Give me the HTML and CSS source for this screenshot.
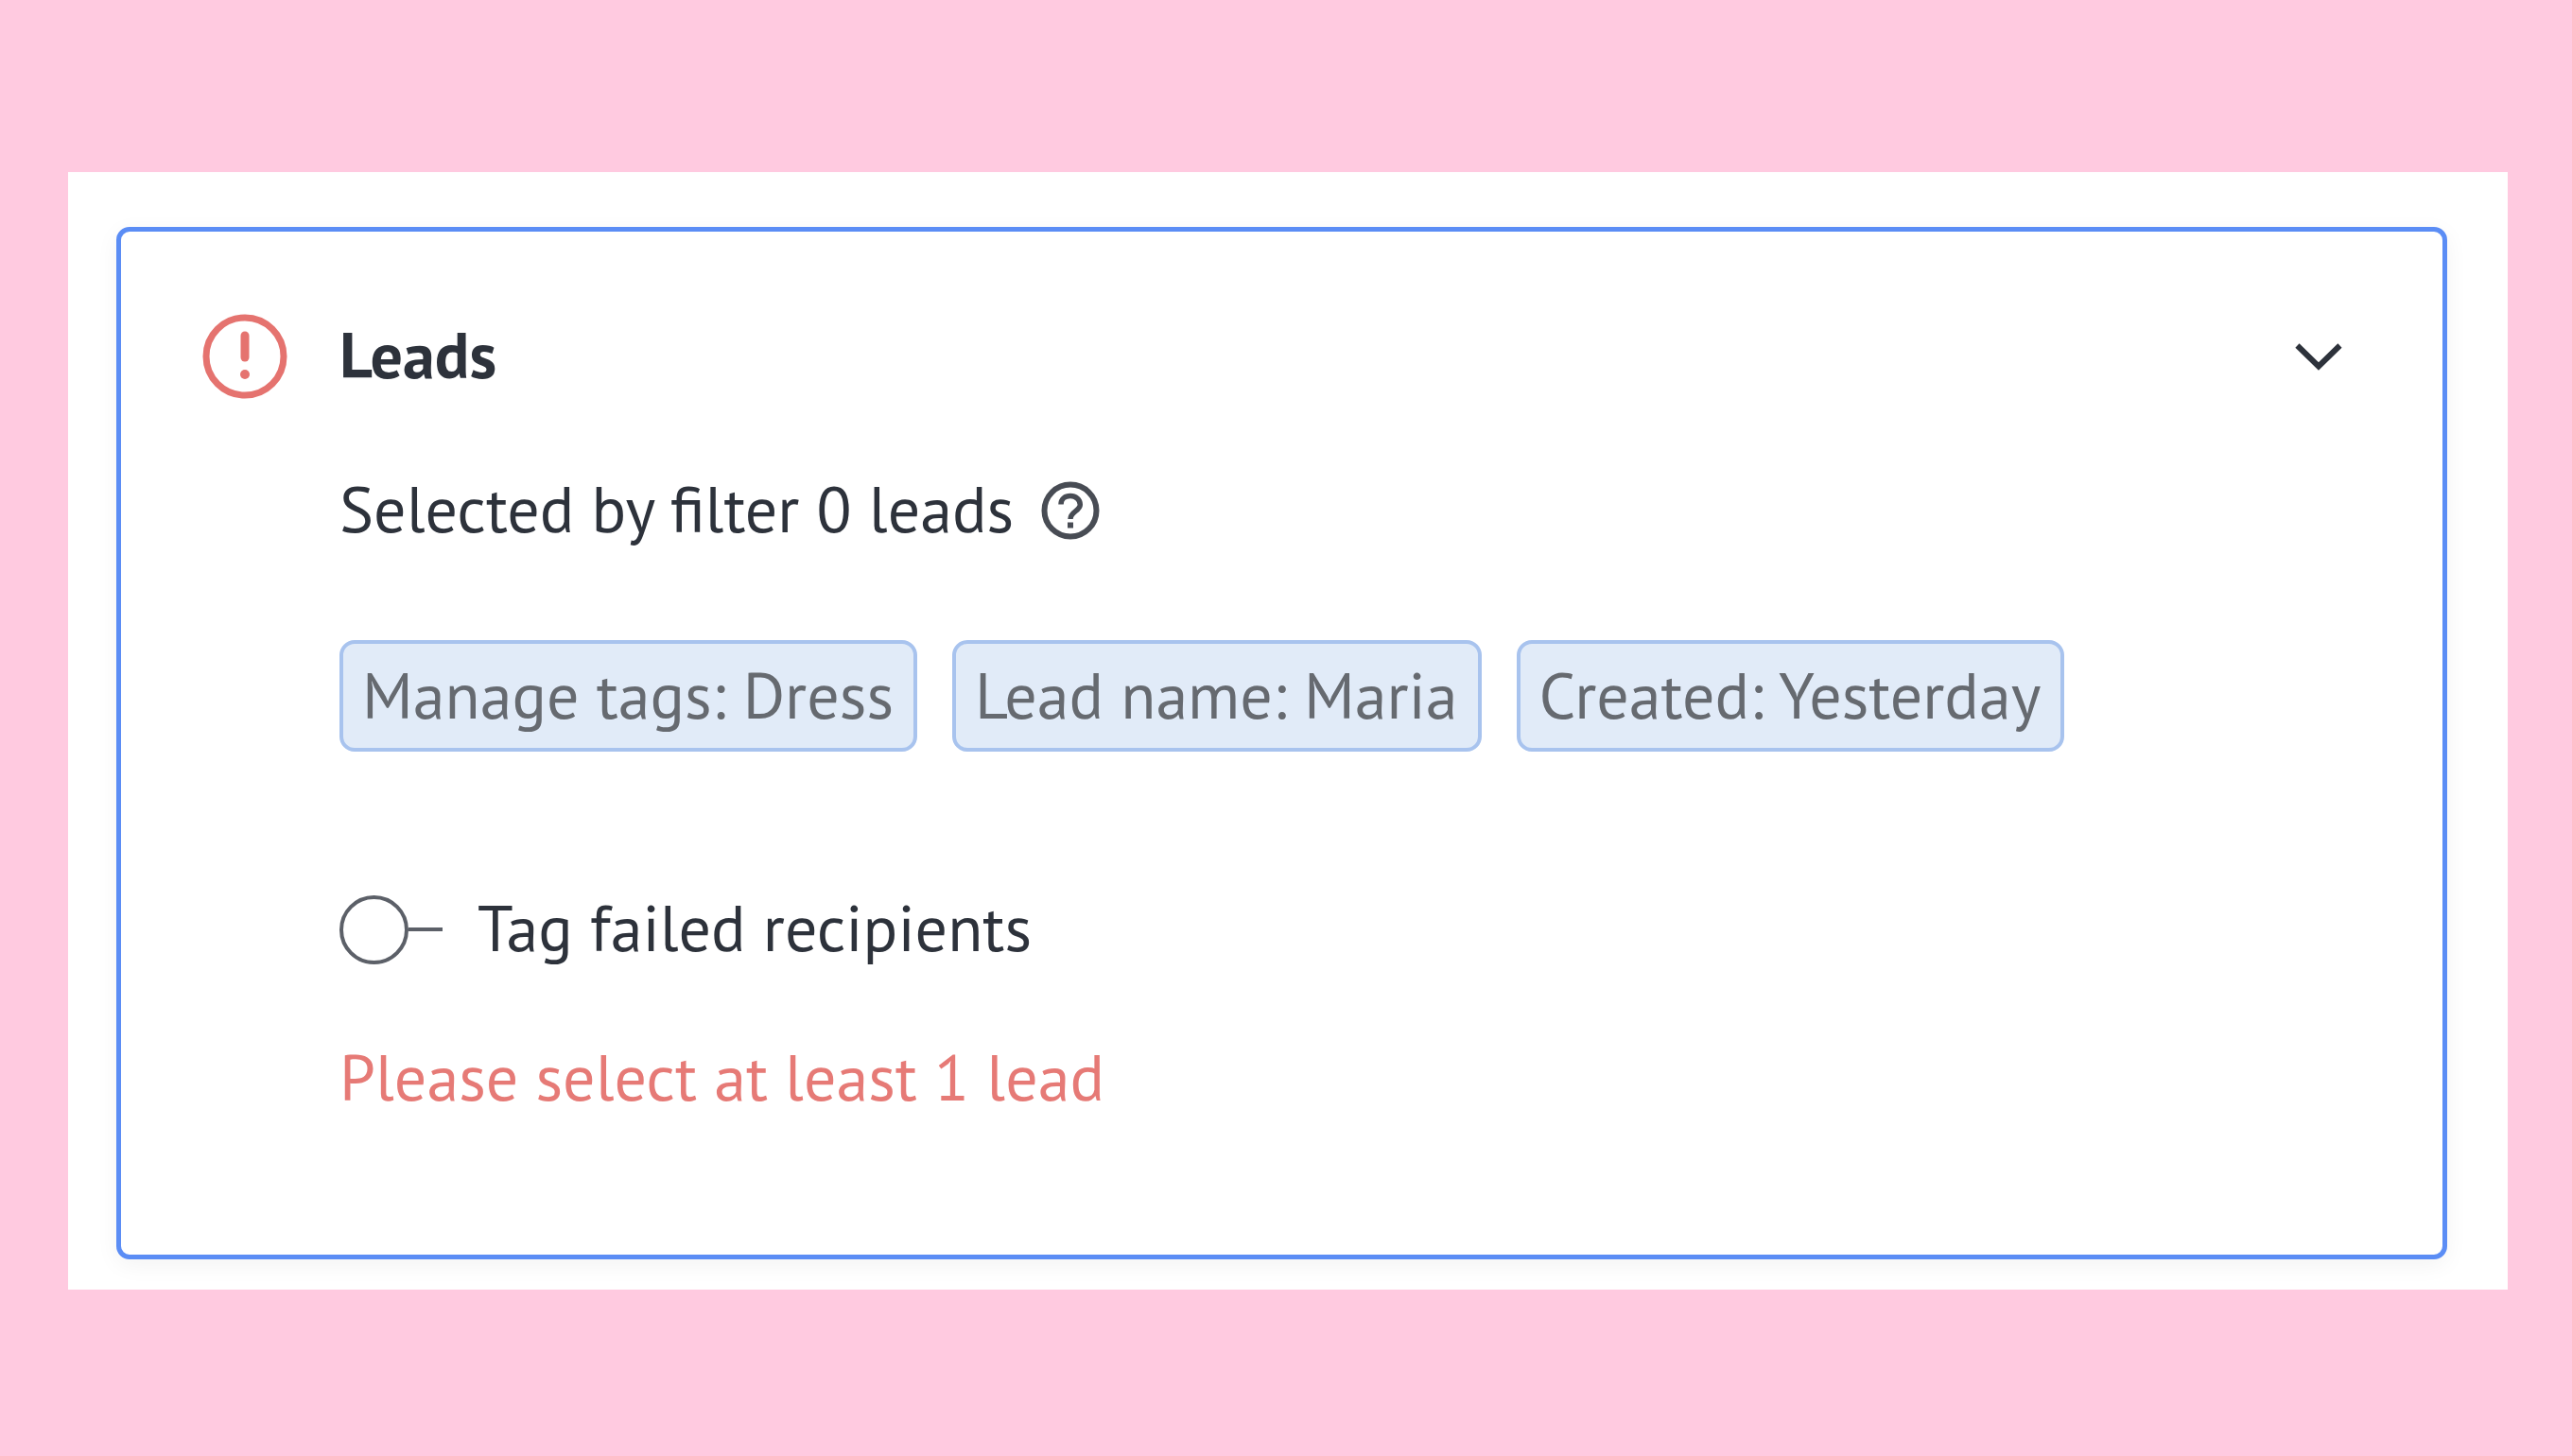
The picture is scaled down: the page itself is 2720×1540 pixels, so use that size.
FILE: index.html
```html
<!DOCTYPE html>
<html lang="en">
<head>
  <meta charset="utf-8">
  <meta name="viewport" content="width=device-width, initial-scale=1">
  <title>Leads</title>
  <link rel="stylesheet" href="styles.css">
</head>
<body>
  <main class="panel">
    <section class="card" aria-labelledby="leads-title">
      <header class="card-header">
        <svg class="alert-icon" viewBox="0 0 90 90" fill="none" aria-hidden="true">
          <circle cx="45" cy="45" r="41" stroke="currentColor" stroke-width="7"/>
          <path d="M45 23v23" stroke="currentColor" stroke-width="9" stroke-linecap="round"/>
          <circle cx="45" cy="64" r="5" fill="currentColor"/>
        </svg>
        <h1 class="card-title label" id="leads-title">Leads</h1>
        <button class="icon-button" type="button" aria-label="Collapse" aria-expanded="true">
          <svg class="chevron-icon" viewBox="0 0 50 30" fill="none" aria-hidden="true">
            <path d="M2.500 3.500l22.500 22L47.500 3.500" stroke="currentColor" stroke-width="6"/>
          </svg>
        </button>
      </header>
      <div class="card-body">
        <div class="summary">
          <p class="label">Selected by filter 0 leads</p>
          <button class="icon-button" type="button" aria-label="Help">
            <svg class="help-icon" viewBox="0 0 62 62" fill="none" aria-hidden="true">
              <circle cx="31" cy="31" r="27.500" stroke="currentColor" stroke-width="6"/>
              <path d="M21 24.500C21 18.500 25.500 15.500 31 15.500s10.300 3.700 10.300 9.300C41.300 31.500 31 32 31 40" stroke="currentColor" stroke-width="5.500"/>
              <path d="M28 43.500h6v6h-6z" fill="currentColor"/>
            </svg>
          </button>
        </div>
        <ul class="chips">
          <li class="chip">Manage tags: Dress</li>
          <li class="chip">Lead name: Maria</li>
          <li class="chip">Created: Yesterday</li>
        </ul>
        <label class="toggle-row">
          <input class="toggle" type="checkbox" role="switch">
          <span class="label">Tag failed recipients</span>
        </label>
        <p class="error" role="alert">Please select at least 1 lead</p>
      </div>
    </section>
  </main>
</body>
</html>
```
FILE: styles.css
```css
*,
*::before,
*::after {
  box-sizing: border-box;
}

body {
  margin: 0;
  padding: 182px 68px 176px 72px;
  background: #ffcae0;
  color: #2d323b;
  font-family: "PT Sans", "Noto Sans", sans-serif;
  font-size: 68px;
  line-height: 86px;
}

h1,
p,
ul {
  margin: 0;
  padding: 0;
}

.panel {
  padding: 58px 64px 32px 51px;
  background: #fff;
}

.card {
  padding: 87px 106px 145px 86px;
  border: 5px solid #5b8df5;
  border-radius: 14px;
  background: #fff;
  box-shadow: 0 6px 24px rgba(0, 0, 0, 0.05);
}

.card-header {
  display: flex;
  align-items: center;
  gap: 55px;
}

.label {
  padding-bottom: 4px;
}

.alert-icon {
  width: 90px;
  height: 90px;
  color: #e5736f;
}

.card-title {
  flex: 1;
  font-size: 68px;
  font-weight: 700;
}

.icon-button {
  display: flex;
  padding: 0;
  border: 0;
  background: none;
  color: inherit;
  cursor: pointer;
}

.chevron-icon {
  width: 50px;
  height: 30px;
}

.card-body {
  padding: 73px 0 0 145px;
}

.summary {
  display: flex;
  align-items: center;
  gap: 29px;
}

.help-icon {
  width: 62px;
  height: 62px;
  color: #484c54;
}

.chips {
  display: flex;
  flex-wrap: wrap;
  gap: 37px;
  margin-top: 92px;
  list-style: none;
}

.chip {
  padding: 11px 21px 13px 20px;
  border: 4px solid #a8c3ee;
  border-radius: 16px;
  background: #e1ebf8;
  color: #666a70;
}

.toggle-row {
  display: flex;
  align-items: center;
  gap: 37px;
  margin-top: 143px;
}

.toggle-row .label {
  display: block;
}

.toggle {
  display: flex;
  align-items: center;
  width: 109px;
  height: 73px;
  margin: 0;
  appearance: none;
  color: #5c6068;
}

.toggle::before {
  content: "";
  width: 73px;
  height: 73px;
  border: 4px solid;
  border-radius: 50%;
}

.toggle::after {
  content: "";
  flex: 1;
  height: 4px;
  background: currentColor;
}

.error {
  margin-top: 68px;
  color: #e67a76;
}
```
